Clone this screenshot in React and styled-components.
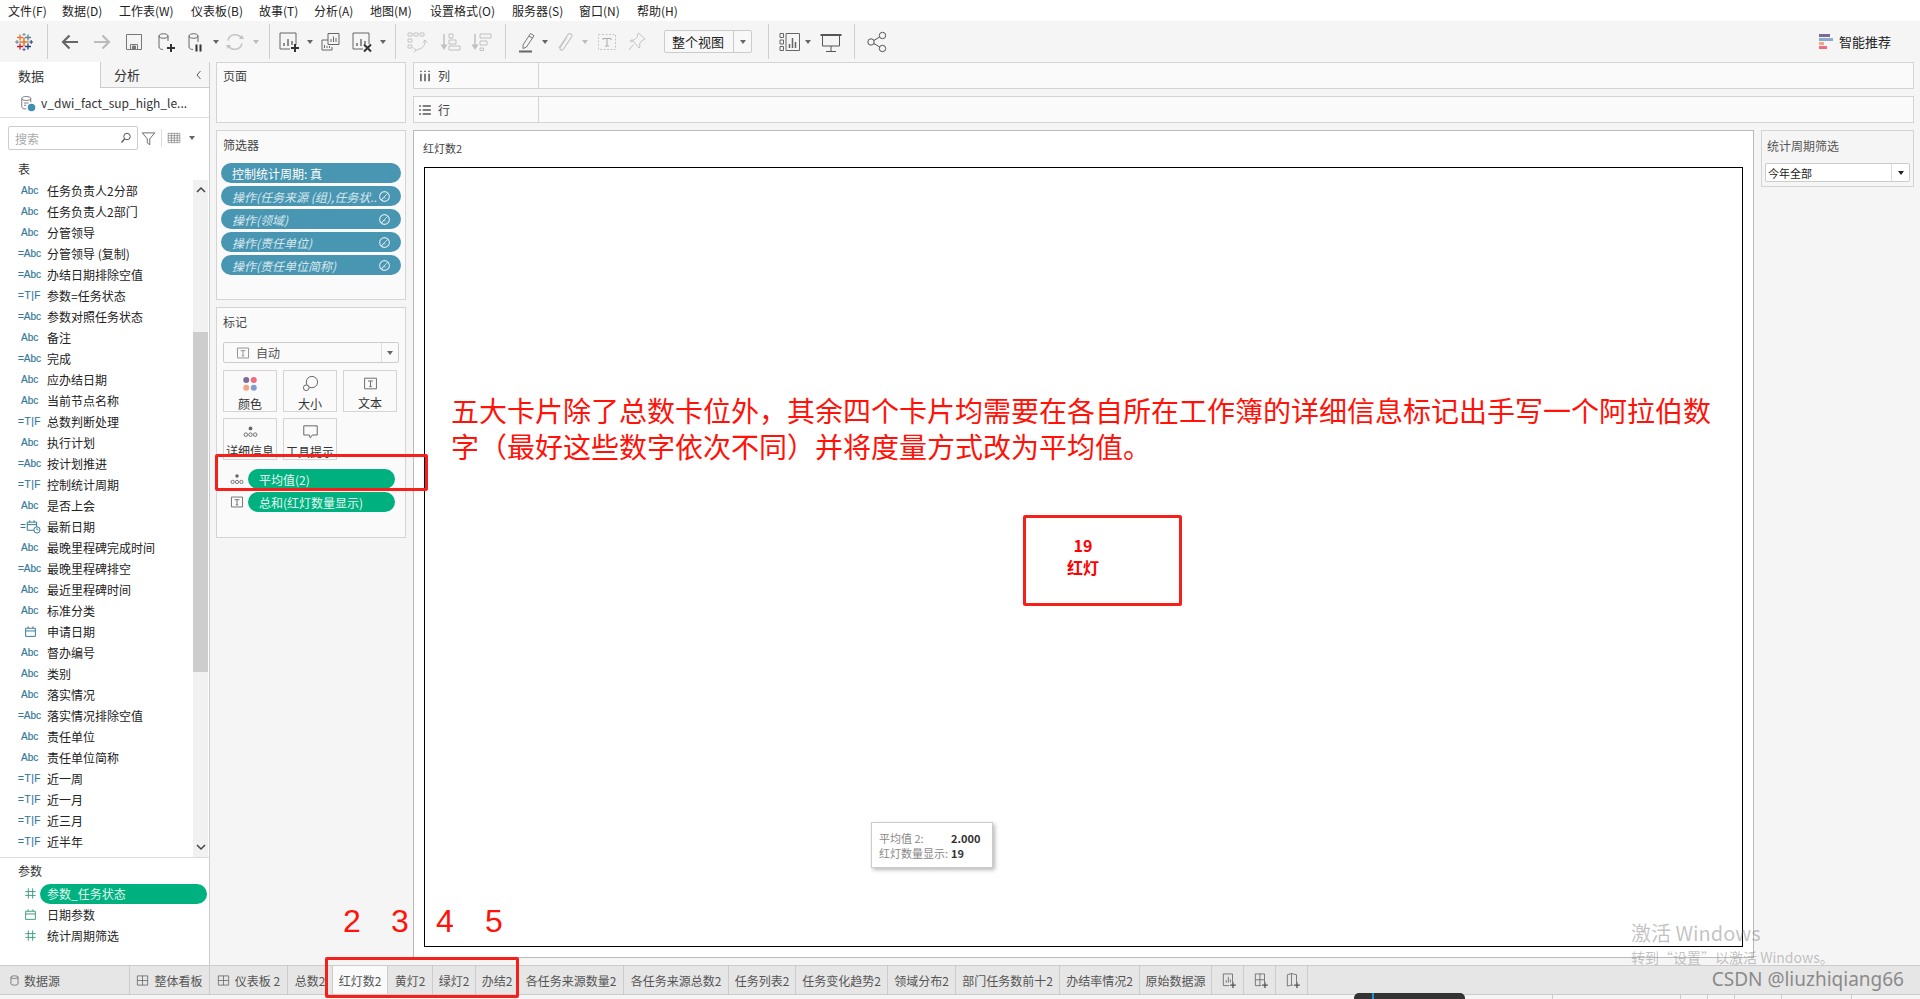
import styled, { createGlobalStyle } from "styled-components"

const fields = [
  ["任务负责人2分部", "abc"], ["任务负责人2部门", "abc"], ["分管领导", "abc"], ["分管领导 (复制)", "calc"],
  ["办结日期排除空值", "calc"], ["参数=任务状态", "tf"], ["参数对照任务状态", "calc"], ["备注", "abc"],
  ["完成", "calc"], ["应办结日期", "abc"], ["当前节点名称", "abc"], ["总数判断处理", "tf"],
  ["执行计划", "abc"], ["按计划推进", "calc"], ["控制统计周期", "tf"], ["是否上会", "abc"],
  ["最新日期", "datetime"], ["最晚里程碑完成时间", "abc"], ["最晚里程碑排空", "calc"], ["最近里程碑时间", "abc"],
  ["标准分类", "abc"], ["申请日期", "date"], ["督办编号", "abc"], ["类别", "abc"],
  ["落实情况", "abc"], ["落实情况排除空值", "calc"], ["责任单位", "abc"], ["责任单位简称", "abc"],
  ["近一周", "tf"], ["近一月", "tf"], ["近三月", "tf"], ["近半年", "tf"],
]

const menus = [
  ["文件(F)", 54], ["数据(D)", 57], ["工作表(W)", 72], ["仪表板(B)", 68], ["故事(T)", 55], ["分析(A)", 56],
  ["地图(M)", 60], ["设置格式(O)", 82], ["服务器(S)", 67], ["窗口(N)", 58], ["帮助(H)", 60],
]

const sheets = [
  ["总数2", 45], ["红灯数2", 55, true], ["黄灯2", 45], ["绿灯2", 43], ["办结2", 43], ["各任务来源数量2", 105],
  ["各任务来源总数2", 105], ["任务列表2", 67], ["任务变化趋势2", 92], ["领域分布2", 68], ["部门任务数前十2", 104],
  ["办结率情况2", 80], ["原始数据源", 72],
]

const statusCells = [1553, 128, 27, 27, 47, 70]

const GlobalStyle = createGlobalStyle`
  html, body { margin: 0; padding: 0; }
  body { font-family: "Noto Sans CJK SC", "Noto Sans", sans-serif; font-size: 12px; color: #333; }
  * { box-sizing: border-box; }
`

const Glyph = styled.svg.attrs((p) => ({
  width: p.$s || 24,
  height: p.$s || 24,
  viewBox: "0 0 24 24",
}))`
  fill: none;
  stroke: ${(p) => p.$c || "#666"};
  stroke-width: 1;
  display: block;
  flex: none;
`

function Logo() {
  const marks = [
    [12, 12, 4.5, "#e8762c", 1.6], [8, 7.5, 3, "#e8762c", 1.3], [16, 7.5, 3, "#5b879b", 1.3],
    [8, 16.5, 3, "#c72035", 1.3], [16, 16.5, 3, "#1f447e", 1.3], [12, 4.5, 1.6, "#7099a6", 1],
    [12, 19.5, 1.6, "#5b6591", 1], [5, 12, 2, "#5b879b", 1], [19.2, 12, 2, "#1f447e", 1],
  ]
  return (
    <Glyph $s={24}>
      {marks.map(([x, y, r, c, w], i) => (
        <path key={i} d={`M${x - r} ${y}H${x + r}M${x} ${y - r}V${y + r}`} stroke={c} strokeWidth={w} />
      ))}
    </Glyph>
  )
}

const Arrow = ({ flip, c }) => (
  <Glyph $c={c} style={flip ? { transform: "scaleX(-1)" } : undefined}>
    <path d="M20 12H5M11.5 5.5 5 12l6.5 6.5" strokeWidth="2.2" />
  </Glyph>
)

const SaveIcon = () => (
  <Glyph $c="#777">
    <path d="M4.5 4.5h15v15h-15zM8.5 19v-4.5h7V19" />
    <path d="M10.5 16h3v3h-3z" fill="#777" />
  </Glyph>
)

const Plus = ({ x = 18, y = 18, c = "#333" }) => (
  <path d={`M${x - 4} ${y}h8M${x} ${y - 4}v8`} stroke={c} strokeWidth="2" />
)

const DbAdd = () => (
  <Glyph $c="#666">
    <path d="M5 6c0-3 9-3 9 0s-9 3-9 0zM5 6v11c0 1.6 2 2.500 4 2.500M14 6v5" />
    <Plus x={17} y={18} />
  </Glyph>
)

const DbPause = () => (
  <Glyph $c="#666">
    <path d="M5 6c0-3 9-3 9 0s-9 3-9 0zM5 6v11c0 1.6 2 2.500 4 2.500M14 6v6" />
    <path d="M12.5 14.5v7M16.5 14.5v7" stroke="#333" strokeWidth="2" />
  </Glyph>
)

const Refresh = () => (
  <Glyph $c="#c4c4c4">
    <path d="M5 10.5A7.5 7.5 0 0 1 18.500 8M19 13.5A7.5 7.5 0 0 1 5.500 16" strokeWidth="1.5" />
    <path d="M16 9h5l-2-4zM8 15H3l2 4z" fill="#c4c4c4" stroke="none" />
  </Glyph>
)

const Bars = ({ x = 0, y = 0, w = 16, c = "#666" }) => (
  <g stroke={c}>
    <path d={`M${x + 4} ${y + w - 3}v-3M${x + 8} ${y + w - 3}v-7M${x + 12} ${y + w - 3}v-5`} strokeWidth="1.4" />
    <path d={`M${x} ${y}h${w}v${w}h-${w}z`} strokeWidth="1" />
  </g>
)

const NewSheet = () => (
  <Glyph>
    <Bars x={3} y={3} />
    <path d="M13 15h10v9H13z" fill="#f5f5f5" stroke="none" />
    <Plus x={18} y={18} />
  </Glyph>
)

const DupSheet = () => (
  <Glyph $s={24}>
    <path d="M3 10h6M3 10v10h10v-3" />
    <path d="M5.5 18v-3M8 18v-2M10.5 18v-2" />
    <path d="M9 3.5h11v11H9z" />
    <path d="M12 12V9M14.5 12V6.5M17 12V8" />
  </Glyph>
)

const ClearSheet = () => (
  <Glyph>
    <Bars x={3} y={3} />
    <path d="M13 14h10v10H13z" fill="#f5f5f5" stroke="none" />
    <path d="M14 14.5l7 7M21 14.5l-7 7" stroke="#333" strokeWidth="2" />
  </Glyph>
)

const GroupIcon = () => (
  <Glyph $c="#c4c4c4">
    <path d="M3 3h4v3H3zM9 3h4v3H9zM15 3h4v3h-4zM3 9h4v3H3zM3 15h4v3H3z" />
    <path d="M20 11c0 5-3 8-9 9M8.500 18l2.500 2-2 2.500M20 10l-2 2.500M20 10l2 2.500" />
  </Glyph>
)

const SortIcon = ({ desc }) => (
  <Glyph $c="#c0c0c0">
    <path d="M6 4v14" strokeWidth="1.5" />
    <path d="M2.5 14.5h7L6 20z" fill="#c0c0c0" stroke="none" />
    {desc ? (
      <path d="M11 4h11v4H11zM11 11h7v4h-7zM11 18h3.500v2.500H11z" />
    ) : (
      <path d="M11 4h4v4h-4zM11 10h7v4h-7zM11 16h11v4H11z" />
    )}
  </Glyph>
)

const Pen = () => (
  <Glyph $c="#777">
    <path d="M8 15 15.5 3.5l3.500 2.200L11.500 17 8 18.500zM14 6l3.500 2.200" />
    <path d="M4 21.5h13" stroke="#666" strokeWidth="2" />
  </Glyph>
)

const Clip = () => (
  <Glyph $c="#c4c4c4">
    <path d="M6 18 15 4.5c1.5-2 5-.2 3.800 2L10.500 19c-1.500 2.200-4.500.6-3.300-1.600L14 7" strokeWidth="1.2" />
  </Glyph>
)

const TextDash = () => (
  <Glyph $c="#c4c4c4">
    <path d="M3.5 4.5h17v15h-17z" strokeDasharray="2 1.5" />
    <path d="M8 8.5h8M12 8.500V16M10 16h4M8 8.500v1.500M16 8.500v1.500" stroke="#aaa" />
  </Glyph>
)

const Pin = () => (
  <Glyph $c="#c4c4c4">
    <path d="M13.5 3 20 9l-1.500 1-1 0-3 4 .5 3-1 1-3-3.500-2.500-3L5 11l1-1 3 .2 3.500-3.500L12.500 5zM8.500 14.500 4 20" />
  </Glyph>
)

const ShowMe = () => (
  <Glyph $c="#666">
    <path d="M2 3.5h3.500v4H2zM2 10h3.500v4H2zM2 16.500h3.500v4H2zM8 3.500h13.500v17H8z" />
    <path d="M11.5 18v-4M14.500 18V8M17.500 18v-6" strokeWidth="1.5" />
  </Glyph>
)

const Present = () => (
  <Glyph $c="#555">
    <path d="M1.5 5h21" strokeWidth="2" />
    <path d="M3.5 5v11h17V5M12 16v5.500M7 21.500h10" />
  </Glyph>
)

const Share = () => (
  <Glyph $c="#555">
    <circle cx="6" cy="12" r="3.2" />
    <circle cx="17.5" cy="5.5" r="3.2" />
    <circle cx="17.5" cy="18.5" r="3.2" />
    <path d="M8.8 10.5 14.700 7M8.800 13.500l5.900 3.500" />
  </Glyph>
)

const Tree = ({ s = 14, c = "#666", top = "#666" }) => (
  <Glyph $s={s} $c={c}>
    <circle cx="12" cy="7" r="3" fill={top} stroke="none" />
    <circle cx="4.5" cy="17" r="2.8" strokeWidth="1.5" />
    <circle cx="12" cy="17" r="2.8" strokeWidth="1.5" />
    <circle cx="19.5" cy="17" r="2.8" strokeWidth="1.5" />
  </Glyph>
)

const SmallCalendar = ({ c }) => (
  <Glyph $s={13} $c={c}>
    <path d="M3 6h18v15H3zM3 11h18M7.500 2.500V6M16.500 2.500V6" strokeWidth="1.8" />
  </Glyph>
)

const CalendarClock = ({ c }) => (
  <Glyph $s={15} $c={c}>
    <path d="M2 5h15v13H2zM2 9h15M6 2v3M13 2v3" strokeWidth="1.6" />
    <circle cx="17.5" cy="17.5" r="5" fill="#fff" strokeWidth="1.6" />
    <path d="M17.5 14.500v3h2.500" strokeWidth="1.3" />
  </Glyph>
)

const HashIcon = () => (
  <Glyph $s={13} $c="#3f9d82">
    <path d="M8 2.500v19M16 2.500v19M2.500 8.500h19M2.500 15.500h19" strokeWidth="1.8" />
  </Glyph>
)

const LinkBadge = () => (
  <Glyph $s={13} $c="#dbe9ef">
    <circle cx="12" cy="12" r="9" strokeWidth="2" />
    <path d="M6 18 18 6M9 21c-4-4 1-9 5-6" strokeWidth="1.6" />
  </Glyph>
)

const BoxT = ({ s = 14, c = "#666" }) => (
  <Glyph $s={s} $c={c}>
    <path d="M2.500 3.500h19v17h-19zM8 8h8M12 8v9M10 17h4" strokeWidth="1.5" />
  </Glyph>
)

const TabGrid = () => (
  <Glyph $s={13} $c="#666">
    <path d="M2.500 3.500h19v17h-19zM12 3.500v17M2.500 12h19" strokeWidth="1.5" />
  </Glyph>
)

const TabDb = () => (
  <Glyph $s={13} $c="#666">
    <path d="M5.500 6c0-3.500 13-3.500 13 0v12c0 3.500-13 3.500-13 0zM5.500 6c0 3 13 3 13 0" strokeWidth="1.5" />
  </Glyph>
)

const AddTabIcon = ({ kind }) => (
  <Glyph $s={20} $c="#666">
    {kind === "sheet" && <path d="M4 3.500h11v14H4zM7.500 14v-3M10 14V7M12.500 14v-4" />}
    {kind === "board" && <path d="M4 3.500h11v14H4zM9.500 3.500v14M4 10.500h11" />}
    {kind === "story" && <path d="M4 4.500l5-1.500v14l-5 1zM9 3l6 1.500v13L9 17" />}
    <path d="M11 14h9v9h-9z" fill="#e6e6e6" stroke="none" />
    <path d="M12 17h7M15.500 13.500v7" stroke="#555" strokeWidth="1.6" />
  </Glyph>
)

const Page = styled.div`
  position: relative;
  width: 1920px;
  height: 999px;
  overflow: hidden;
  display: flex;
  flex-direction: column;
  background: #f5f5f5;
`

const MenuBar = styled.div`
  height: 21px;
  flex: none;
  display: flex;
  align-items: center;
  padding-left: 8px;
  background: #fff;
`

const MenuItem = styled.span`
  width: ${(p) => p.$w}px;
  color: #222;
  white-space: nowrap;
`

const Toolbar = styled.div`
  height: 41px;
  flex: none;
  display: flex;
  align-items: center;
`

const ToolGroup = styled.div`
  width: ${(p) => p.$w}px;
  height: 35px;
  flex: none;
  display: flex;
  align-items: center;
  padding-left: ${(p) => p.$pl || 0}px;
  border-right: 1px solid #cfcfcf;
`

const ToolSlot = styled.div`
  width: ${(p) => p.$w}px;
  flex: none;
  display: flex;
  align-items: center;
  justify-content: center;
`

const ShareSlot = styled(ToolSlot)`
  margin-left: 5px;
`

const Caret = styled.i`
  display: block;
  border-style: solid;
  border-width: 4px 3.5px 0;
  border-color: ${(p) => p.$c || "#666"} transparent transparent;
`

const ViewSelect = styled.div`
  width: 88px;
  height: 23px;
  margin-left: 14px;
  display: flex;
  align-items: center;
  background: #f8f8f8;
  border: 1px solid #ccc;
  border-radius: 2px;
  font-size: 13px;
  color: #222;
`

const ViewLabel = styled.span`
  flex: 1;
  padding-left: 7px;
`

const ViewCaret = styled.span`
  width: 18px;
  height: 100%;
  display: flex;
  align-items: center;
  justify-content: center;
  border-left: 1px solid #ccc;
`

const Recommend = styled.div`
  margin-left: auto;
  padding-right: 29px;
  display: flex;
  align-items: center;
  gap: 6px;
  font-size: 13px;
  color: #222;
`

const RecommendBars = styled.div`
  width: 14px;
  display: flex;
  flex-direction: column;
  gap: 1.5px;
`

const RecommendBar = styled.i`
  display: block;
  height: 2.7px;
  width: ${(p) => p.$w}px;
  background: ${(p) => p.$c};
`

const Main = styled.div`
  flex: 1;
  min-height: 0;
  display: flex;
`

const LeftPane = styled.aside`
  width: 210px;
  flex: none;
  display: flex;
  flex-direction: column;
  background: #fff;
  border-right: 1px solid #ccc;
`

const PaneTabs = styled.div`
  height: 26px;
  flex: none;
  display: flex;
`

const PaneTab = styled.div`
  width: ${(p) => p.$w}px;
  display: flex;
  align-items: center;
  justify-content: space-between;
  padding: 0 4px 0 ${(p) => p.$pl}px;
  font-size: 13px;
  color: #333;
  background: ${(p) => (p.$active ? "#fff" : "#f5f5f5")};
  border-bottom: ${(p) => (p.$active ? "none" : "1px solid #ccc")};
  border-left: ${(p) => (p.$active ? "none" : "1px solid #ccc")};
`

const SourceRow = styled.div`
  height: 30px;
  flex: none;
  display: flex;
  align-items: center;
  gap: 5px;
  padding-left: 18px;
  border-bottom: 1px solid #ddd;
  color: #333;
`

const SearchRow = styled.div`
  height: 39px;
  flex: none;
  display: flex;
  align-items: center;
  padding: 1px 0 0 8px;
`

const SearchBox = styled.div`
  width: 130px;
  height: 24px;
  display: flex;
  align-items: center;
  justify-content: space-between;
  padding: 0 5px 0 6px;
  border: 1px solid #ccc;
  border-radius: 2px;
  color: #aaa;
`

const SearchTools = styled.div`
  display: flex;
  align-items: center;
  margin-left: 3px;
`

const ToolDivider = styled.span`
  width: 1px;
  height: 18px;
  margin: 0 5px;
  background: #ddd;
`

const SectionTitle = styled.div`
  height: ${(p) => p.$h}px;
  flex: none;
  padding-left: 18px;
  color: #333;
  line-height: ${(p) => p.$h}px;
`

const FieldsWrap = styled.div`
  height: 678px;
  flex: none;
  display: flex;
  justify-content: space-between;
  border-bottom: 1px solid #ddd;
`

const FieldList = styled.div`
  flex: 1;
`

const FieldRow = styled.div`
  height: 21px;
  display: flex;
  align-items: center;
  padding-left: 17px;
  white-space: nowrap;
  color: #222;
`

const TypeTag = styled.span`
  width: 30px;
  flex: none;
  padding-left: ${(p) => (p.$calc ? 1 : 4)}px;
  font-family: "Liberation Sans", sans-serif;
  font-size: 10px;
  letter-spacing: ${(p) => (p.$tf ? "0.6px" : "0")};
  -webkit-text-stroke: 0.2px #35799a;
  color: #35799a;
`

const DateTag = styled.span`
  width: 30px;
  flex: none;
  display: flex;
  align-items: center;
  padding-left: ${(p) => (p.$calc ? 3 : 7)}px;
  font-family: "Liberation Sans", sans-serif;
  font-size: 10px;
  color: #35799a;
`

const ScrollTrack = styled.div`
  width: 15px;
  flex: none;
  margin-right: 1px;
  display: flex;
  flex-direction: column;
  align-items: center;
  background: #f1f1f1;
`

const ScrollArrow = styled.div`
  height: ${(p) => p.$h}px;
  flex: none;
  display: flex;
  align-items: center;
  justify-content: center;
`

const ScrollThumb = styled.div`
  width: 100%;
  height: 340px;
  flex: none;
  margin-top: 132px;
  background: #cdcdcd;
`

const ScrollFill = styled.div`
  flex: 1;
`

const ParamRow = styled.div`
  height: 21px;
  display: flex;
  align-items: center;
  padding-left: 24px;
  color: #222;
`

const ParamIcon = styled.span`
  width: 16px;
  flex: none;
`

const ParamPill = styled.div`
  width: 167px;
  height: 20px;
  display: flex;
  align-items: center;
  padding-left: 7px;
  border-radius: 10px;
  background: #00b180;
  color: #dff5ee;
`

const ParamName = styled.span`
  padding-left: 7px;
`

const MiddleCol = styled.div`
  width: 190px;
  flex: none;
  margin-left: 6px;
  display: flex;
  flex-direction: column;
  gap: 7px;
`

const Card = styled.section`
  height: ${(p) => p.$h}px;
  flex: none;
  background: #fafafa;
  border: 1px solid #d4d4d4;
`

const CardTitle = styled.div`
  padding: ${(p) => p.$t}px 0 0 6px;
  height: ${(p) => p.$hh}px;
  color: #444;
`

const PillStack = styled.div`
  display: flex;
  flex-direction: column;
  gap: 3px;
  padding: 0 4px;
`

const FilterPill = styled.div`
  height: 20px;
  display: flex;
  align-items: center;
  justify-content: space-between;
  padding: 0 10px 0 11px;
  border-radius: 10px;
  background: #4996b2;
  color: ${(p) => (p.$action ? "#d7e7ed" : "#fff")};
  font-style: ${(p) => (p.$action ? "italic" : "normal")};
  white-space: nowrap;
`

const MarkSelect = styled.div`
  height: 21px;
  margin: 0 6px;
  display: flex;
  align-items: center;
  padding-left: 12px;
  gap: 6px;
  border: 1px solid #ccc;
  border-radius: 2px;
  color: #555;
`

const MarkCaret = styled.span`
  margin-left: auto;
  width: 17px;
  height: 100%;
  display: flex;
  align-items: center;
  justify-content: center;
  border-left: 1px solid #ddd;
`

const MarkGrid = styled.div`
  display: grid;
  grid-template-columns: repeat(3, 54px);
  grid-auto-rows: 42px;
  column-gap: 6px;
  row-gap: 6px;
  margin: 7px 6px 0;
`

const MarkButton = styled.div`
  display: flex;
  flex-direction: column;
  align-items: center;
  padding-top: 4px;
  gap: 3px;
  border: 1px solid #d4d4d4;
  color: #333;
  white-space: nowrap;
`

const MarkIconBox = styled.div`
  height: 17px;
  display: flex;
  align-items: center;
  justify-content: center;
`

const MarkRows = styled.div`
  margin-top: 9px;
  display: flex;
  flex-direction: column;
  gap: 3px;
`

const MarkRow = styled.div`
  height: 20px;
  display: flex;
  align-items: center;
  padding-left: 13px;
`

const MarkRowIcon = styled.span`
  width: 18px;
  flex: none;
`

const MeasurePill = styled.div`
  width: 147px;
  height: 20px;
  display: flex;
  align-items: center;
  padding-left: 11px;
  border-radius: 10px;
  background: #00b180;
  color: #e3f7f0;
`

const Workspace = styled.div`
  flex: 1;
  min-width: 0;
  margin: 0 6px 0 7px;
  display: flex;
  flex-direction: column;
  gap: 7px;
`

const Shelf = styled.div`
  height: 27px;
  flex: none;
  display: flex;
  background: #fafafa;
  border: 1px solid #d4d4d4;
`

const ShelfLabel = styled.div`
  width: 125px;
  display: flex;
  align-items: center;
  gap: 6px;
  padding-left: 4px;
  border-right: 1px solid #d4d4d4;
  color: #444;
`

const ViewRow = styled.div`
  height: 828px;
  flex: none;
  display: flex;
  gap: 7px;
`

const VizCard = styled.section`
  width: 1341px;
  flex: none;
  display: flex;
  flex-direction: column;
  background: #fff;
  border: 1px solid #b9b9b9;
`

const VizTitle = styled.div`
  height: 36px;
  flex: none;
  padding: 9px 0 0 9px;
  font-size: 11px;
  color: #444;
`

const Chart = styled.div`
  flex: 1;
  margin: 0 10px 10px 10px;
  border: 1px solid #000;
`

const QuickFilter = styled.section`
  flex: 1;
  height: 57px;
  background: #f5f5f5;
  border: 1px solid #d4d4d4;
`

const QuickTitle = styled.div`
  padding: 6px 0 0 5px;
  height: 32px;
  color: #555;
`

const QuickSelect = styled.div`
  height: 19px;
  margin: 0 3px;
  display: flex;
  align-items: center;
  justify-content: space-between;
  padding-left: 2px;
  background: #fff;
  border: 1px solid #ccc;
  border-radius: 2px;
  font-size: 11px;
  color: #222;
`

const QuickCaret = styled.span`
  width: 18px;
  height: 100%;
  display: flex;
  align-items: center;
  justify-content: center;
  border-left: 1px solid #ddd;
`

const TabBar = styled.div`
  height: 30px;
  flex: none;
  display: flex;
  background: #e6e6e6;
  border-top: 1px solid #ccc;
  border-bottom: 1px solid #ccc;
`

const Tab = styled.div`
  width: ${(p) => p.$w}px;
  flex: none;
  display: flex;
  align-items: center;
  justify-content: center;
  gap: 5px;
  padding-top: 1px;
  border-right: 1px solid #ccc;
  background: ${(p) => (p.$active ? "#fafafa" : "#e6e6e6")};
  color: #555;
  white-space: nowrap;
`

const SourceTab = styled(Tab)`
  justify-content: flex-start;
  gap: 3px;
  padding-left: 8px;
`

const AddTab = styled(Tab)`
  padding-left: 4px;
`

const StatusBar = styled.div`
  height: 4px;
  flex: none;
  display: flex;
  background: #f5f5f5;
`

const StatusCell = styled.div`
  width: ${(p) => p.$w}px;
  flex: none;
  border-right: 1px solid #ccc;
`

// 截图上的批注和浮层
const Annotation = styled.div`
  position: absolute;
  left: 451px;
  top: 392px;
  font-size: 28px;
  line-height: 36px;
  color: #ff1208;
  white-space: nowrap;
`

const RedFrame = styled.div`
  position: absolute;
  left: ${(p) => p.$x}px;
  top: ${(p) => p.$y}px;
  width: ${(p) => p.$w}px;
  height: ${(p) => p.$h}px;
  border: 3px solid #f5201a;
  border-radius: 2px;
`

const BigDigit = styled.span`
  position: absolute;
  left: ${(p) => p.$x}px;
  top: 901px;
  font-family: "Liberation Sans", sans-serif;
  font-size: 32px;
  line-height: 40px;
  color: #ff1208;
`

const CardValue = styled.div`
  position: absolute;
  left: 1043px;
  top: 534px;
  width: 80px;
  text-align: center;
  font-size: 16px;
  line-height: 22px;
  font-weight: 700;
  color: #ff0000;
`

const Tip = styled.div`
  position: absolute;
  left: 871px;
  top: 822px;
  width: 122px;
  height: 46px;
  padding: 8px 0 0 7px;
  display: grid;
  grid-template-columns: 72px 1fr;
  grid-auto-rows: 15px;
  background: #fff;
  border: 1px solid #ccc;
  box-shadow: 2px 2px 4px rgba(0, 0, 0, 0.28);
  font-size: 11px;
  line-height: 15px;
`

const TipKey = styled.span`
  color: #888;
  white-space: nowrap;
`

const TipValue = styled.span`
  font-weight: 700;
  color: #333;
`

const Watermark = styled.div`
  position: absolute;
  left: 1631px;
  top: 918px;
  color: rgba(120, 120, 120, 0.45);
  white-space: nowrap;
`

const WatermarkTop = styled.div`
  font-size: 20px;
  line-height: 30px;
`

const WatermarkSub = styled.div`
  font-size: 14px;
  line-height: 20px;
  margin-top: -1px;
`

const Credit = styled.div`
  position: absolute;
  right: 16px;
  top: 965px;
  font-family: "Noto Sans", sans-serif;
  font-size: 19px;
  line-height: 28px;
  color: #8a8a8a;
`

const DockPill = styled.div`
  position: absolute;
  left: 1354px;
  top: 993px;
  width: 111px;
  height: 8px;
  border-radius: 5px 5px 0 0;
  background: #333;
`

const DockAccent = styled.i`
  display: block;
  width: 2px;
  height: 8px;
  margin-left: 18px;
  background: #1e90d6;
`

function FieldType({ kind }) {
  if (kind === "abc") return <TypeTag>Abc</TypeTag>
  if (kind === "calc") return <TypeTag $calc>=Abc</TypeTag>
  if (kind === "tf") return <TypeTag $calc $tf>=T|F</TypeTag>
  if (kind === "date") return <DateTag><SmallCalendar c="#35799a" /></DateTag>
  return <DateTag $calc>=<CalendarClock c="#35799a" /></DateTag>
}

function Tools() {
  return (
    <Toolbar>
      <ToolGroup $w={48}><ToolSlot $w={47}><Logo /></ToolSlot></ToolGroup>
      <ToolGroup $w={222} $pl={6}>
        <ToolSlot $w={32}><Arrow c="#666" /></ToolSlot>
        <ToolSlot $w={32}><Arrow flip c="#bbb" /></ToolSlot>
        <ToolSlot $w={32}><SaveIcon /></ToolSlot>
        <ToolSlot $w={32}><DbAdd /></ToolSlot>
        <ToolSlot $w={28}><DbPause /></ToolSlot>
        <ToolSlot $w={12}><Caret /></ToolSlot>
        <ToolSlot $w={26}><Refresh /></ToolSlot>
        <ToolSlot $w={16}><Caret $c="#bbb" /></ToolSlot>
      </ToolGroup>
      <ToolGroup $w={126} $pl={2}>
        <ToolSlot $w={34}><NewSheet /></ToolSlot>
        <ToolSlot $w={8}><Caret /></ToolSlot>
        <ToolSlot $w={34}><DupSheet /></ToolSlot>
        <ToolSlot $w={28}><ClearSheet /></ToolSlot>
        <ToolSlot $w={14}><Caret /></ToolSlot>
      </ToolGroup>
      <ToolGroup $w={110} $pl={4}>
        <ToolSlot $w={34}><GroupIcon /></ToolSlot>
        <ToolSlot $w={32}><SortIcon /></ToolSlot>
        <ToolSlot $w={30}><SortIcon desc /></ToolSlot>
      </ToolGroup>
      <ToolGroup $w={263} $pl={8}>
        <ToolSlot $w={26}><Pen /></ToolSlot>
        <ToolSlot $w={10}><Caret /></ToolSlot>
        <ToolSlot $w={30}><Clip /></ToolSlot>
        <ToolSlot $w={10}><Caret $c="#bbb" /></ToolSlot>
        <ToolSlot $w={34}><TextDash /></ToolSlot>
        <ToolSlot $w={26}><Pin /></ToolSlot>
        <ViewSelect>
          <ViewLabel>整个视图</ViewLabel>
          <ViewCaret><Caret /></ViewCaret>
        </ViewSelect>
      </ToolGroup>
      <ToolGroup $w={86} $pl={7}>
        <ToolSlot $w={28}><ShowMe /></ToolSlot>
        <ToolSlot $w={8}><Caret /></ToolSlot>
        <ToolSlot $w={38}><Present /></ToolSlot>
      </ToolGroup>
      <ShareSlot $w={34}><Share /></ShareSlot>
      <Recommend>
        <RecommendBars>
          <RecommendBar $w={11} $c="#7b6a96" />
          <RecommendBar $w={14} $c="#8aacd0" />
          <RecommendBar $w={5} $c="#f4a582" />
          <RecommendBar $w={8} $c="#f26a7e" />
        </RecommendBars>
        智能推荐
      </Recommend>
    </Toolbar>
  )
}

function DataPane() {
  return (
    <LeftPane>
      <PaneTabs>
        <PaneTab $active $w={100} $pl={18}>数据</PaneTab>
        <PaneTab $w={109} $pl={13}>
          分析
          <Glyph $s={12} $c="#555"><path d="M15 4 8 12l7 8" strokeWidth="2" /></Glyph>
        </PaneTab>
      </PaneTabs>
      <SourceRow>
        <Glyph $s={18} $c="#777">
          <path d="M5 6c0-3.500 12-3.500 12 0s-12 3.500-12 0zM5 6v11c0 2 3 3 6 3M17 6v5M8 12h6M8 15h3" strokeWidth="1.3" />
          <circle cx="18" cy="18" r="5" fill="#3f8fb5" stroke="none" />
        </Glyph>
        v_dwi_fact_sup_high_le...
      </SourceRow>
      <SearchRow>
        <SearchBox>
          搜索
          <Glyph $s={12} $c="#555"><circle cx="14" cy="9" r="6.500" strokeWidth="2" /><path d="M9 14 3 21" strokeWidth="2.5" /></Glyph>
        </SearchBox>
        <SearchTools>
          <Glyph $s={15} $c="#666"><path d="M2 3h20l-8 9.500V22l-4-3v-6.500z" strokeWidth="1.5" /></Glyph>
          <ToolDivider />
          <Glyph $s={14} $c="#666"><path d="M2 4h20v16H2zM2 8h20M2 12h20M2 16h20M7.500 4v16M12.500 4v16M17.500 4v16" /></Glyph>
          <ToolSlot $w={22}><Caret /></ToolSlot>
        </SearchTools>
      </SearchRow>
      <SectionTitle $h={23}>表</SectionTitle>
      <FieldsWrap>
        <FieldList>
          {fields.map(([name, kind]) => (
            <FieldRow key={name}>
              <FieldType kind={kind} />
              {name}
            </FieldRow>
          ))}
        </FieldList>
        <ScrollTrack>
          <ScrollArrow $h={20}>
            <Glyph $s={12} $c="#444"><path d="M4 16 12 8l8 8" strokeWidth="3" /></Glyph>
          </ScrollArrow>
          <ScrollThumb />
          <ScrollFill />
          <ScrollArrow $h={20}>
            <Glyph $s={12} $c="#444"><path d="m4 8 8 8 8-8" strokeWidth="3" /></Glyph>
          </ScrollArrow>
        </ScrollTrack>
      </FieldsWrap>
      <SectionTitle $h={25}>参数</SectionTitle>
      <ParamRow>
        <ParamIcon><HashIcon /></ParamIcon>
        <ParamPill>参数_任务状态</ParamPill>
      </ParamRow>
      <ParamRow>
        <ParamIcon><SmallCalendar c="#3f9d82" /></ParamIcon>
        <ParamName>日期参数</ParamName>
      </ParamRow>
      <ParamRow>
        <ParamIcon><HashIcon /></ParamIcon>
        <ParamName>统计周期筛选</ParamName>
      </ParamRow>
    </LeftPane>
  )
}

function Cards() {
  return (
    <MiddleCol>
      <Card $h={61}><CardTitle $hh={30} $t={4}>页面</CardTitle></Card>
      <Card $h={170}>
        <CardTitle $hh={32} $t={5}>筛选器</CardTitle>
        <PillStack>
          <FilterPill>控制统计周期: 真</FilterPill>
          <FilterPill $action>操作(任务来源 (组),任务状.. <LinkBadge /></FilterPill>
          <FilterPill $action>操作(领域) <LinkBadge /></FilterPill>
          <FilterPill $action>操作(责任单位) <LinkBadge /></FilterPill>
          <FilterPill $action>操作(责任单位简称) <LinkBadge /></FilterPill>
        </PillStack>
      </Card>
      <Card $h={231}>
        <CardTitle $hh={34} $t={5}>标记</CardTitle>
        <MarkSelect>
          <BoxT c="#888" />
          自动
          <MarkCaret><Caret /></MarkCaret>
        </MarkSelect>
        <MarkGrid>
          <MarkButton>
            <MarkIconBox>
              <Glyph $s={18}>
                <circle cx="7" cy="6.5" r="4" fill="#7b6a96" stroke="none" />
                <circle cx="17" cy="6.5" r="4" fill="#f26a7e" stroke="none" />
                <circle cx="7" cy="17" r="4" fill="#f4a582" stroke="none" />
                <circle cx="17" cy="17" r="4" fill="#7f9fc9" stroke="none" />
              </Glyph>
            </MarkIconBox>
            颜色
          </MarkButton>
          <MarkButton>
            <MarkIconBox>
              <Glyph $s={17}>
                <circle cx="14" cy="10" r="8" strokeWidth="1.4" />
                <circle cx="6" cy="18" r="4" fill="#fafafa" strokeWidth="1.4" />
              </Glyph>
            </MarkIconBox>
            大小
          </MarkButton>
          <MarkButton>
            <MarkIconBox><BoxT s={15} /></MarkIconBox>
            文本
          </MarkButton>
          <MarkButton>
            <MarkIconBox><Tree s={15} /></MarkIconBox>
            详细信息
          </MarkButton>
          <MarkButton>
            <MarkIconBox>
              <Glyph $s={17}><path d="M2.500 4h19v13h-7l-3 4-1-4h-8z" strokeWidth="1.4" /></Glyph>
            </MarkIconBox>
            工具提示
          </MarkButton>
        </MarkGrid>
        <MarkRows>
          <MarkRow>
            <MarkRowIcon><Tree /></MarkRowIcon>
            <MeasurePill>平均值(2)</MeasurePill>
          </MarkRow>
          <MarkRow>
            <MarkRowIcon><BoxT /></MarkRowIcon>
            <MeasurePill>总和(红灯数量显示)</MeasurePill>
          </MarkRow>
        </MarkRows>
      </Card>
    </MiddleCol>
  )
}

function Canvas() {
  return (
    <Workspace>
      <Shelf>
        <ShelfLabel>
          <Glyph $s={14} $c="#555"><path d="M5 8v13M12 8v13M19 8v13M5 3v2M12 3v2M19 3v2" strokeWidth="2.6" /></Glyph>
          列
        </ShelfLabel>
      </Shelf>
      <Shelf>
        <ShelfLabel>
          <Glyph $s={14} $c="#555"><path d="M8 5h14M8 12h14M8 19h14M2 5h3M2 12h3M2 19h3" strokeWidth="2.6" /></Glyph>
          行
        </ShelfLabel>
      </Shelf>
      <ViewRow>
        <VizCard>
          <VizTitle>红灯数2</VizTitle>
          <Chart />
        </VizCard>
        <QuickFilter>
          <QuickTitle>统计周期筛选</QuickTitle>
          <QuickSelect>
            今年全部
            <QuickCaret><Caret $c="#222" /></QuickCaret>
          </QuickSelect>
        </QuickFilter>
      </ViewRow>
    </Workspace>
  )
}

function App() {
  return (
    <Page>
      <GlobalStyle />
      <MenuBar>
        {menus.map(([label, w]) => (
          <MenuItem key={label} $w={w}>{label}</MenuItem>
        ))}
      </MenuBar>
      <Tools />
      <Main>
        <DataPane />
        <Cards />
        <Canvas />
      </Main>
      <TabBar>
        <SourceTab $w={130}><TabDb />数据源</SourceTab>
        <Tab $w={80}><TabGrid />整体看板</Tab>
        <Tab $w={78}><TabGrid />仪表板 2</Tab>
        {sheets.map(([label, w, active]) => (
          <Tab key={label} $w={w} $active={active}>{label}</Tab>
        ))}
        <AddTab $w={32}><AddTabIcon kind="sheet" /></AddTab>
        <AddTab $w={32}><AddTabIcon kind="board" /></AddTab>
        <AddTab $w={32}><AddTabIcon kind="story" /></AddTab>
      </TabBar>
      <StatusBar>
        {statusCells.map((w, i) => (
          <StatusCell key={i} $w={w} />
        ))}
      </StatusBar>

      <Annotation>
        五大卡片除了总数卡位外，其余四个卡片均需要在各自所在工作簿的详细信息标记出手写一个阿拉伯数
        <br />
        字（最好这些数字依次不同）并将度量方式改为平均值。
      </Annotation>
      <RedFrame $x={1023} $y={515} $w={159} $h={91} />
      <CardValue>19<br />红灯</CardValue>
      <Tip>
        <TipKey>平均值 2:</TipKey>
        <TipValue>2.000</TipValue>
        <TipKey>红灯数量显示:</TipKey>
        <TipValue>19</TipValue>
      </Tip>
      <RedFrame $x={215} $y={454} $w={213} $h={37} />
      <RedFrame $x={325} $y={957} $w={194} $h={41} />
      <BigDigit $x={343}>2</BigDigit>
      <BigDigit $x={391}>3</BigDigit>
      <BigDigit $x={436}>4</BigDigit>
      <BigDigit $x={485}>5</BigDigit>
      <Watermark>
        <WatermarkTop>激活 Windows</WatermarkTop>
        <WatermarkSub>转到“设置”以激活 Windows。</WatermarkSub>
      </Watermark>
      <Credit>CSDN @liuzhiqiang66</Credit>
      <DockPill><DockAccent /></DockPill>
    </Page>
  )
}

export default App
